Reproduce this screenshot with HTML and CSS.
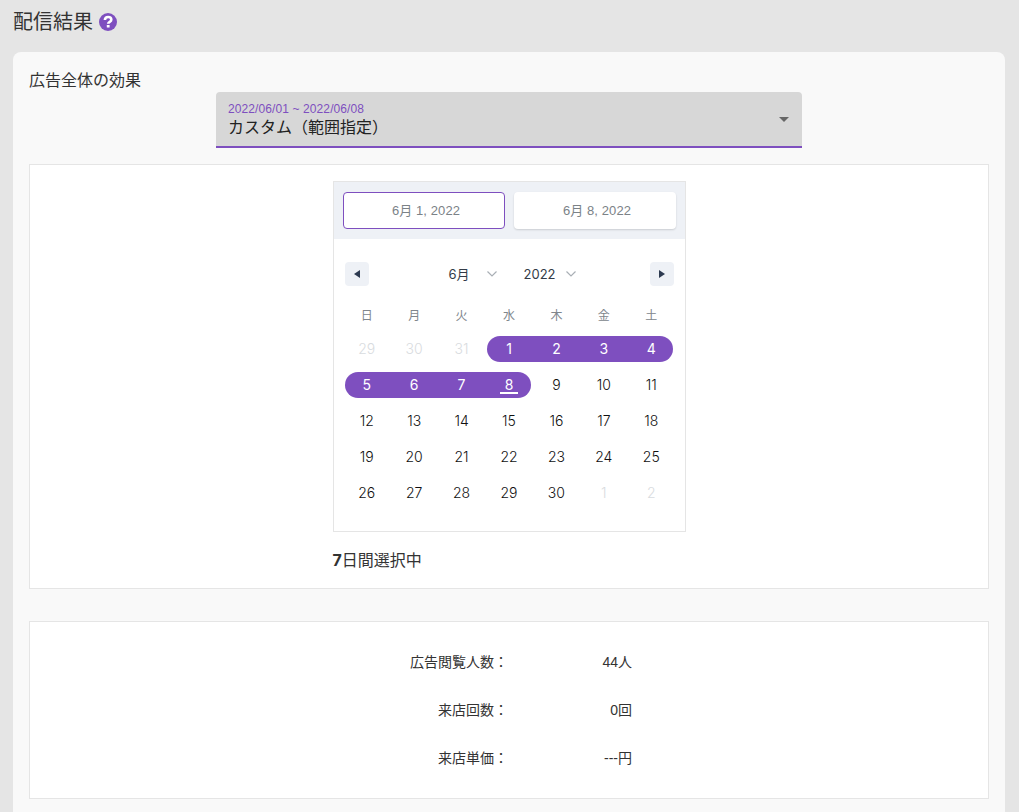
FILE: index.html
```html
<!DOCTYPE html>
<html lang="ja">
    <head>
        <meta charset="UTF-8" />
        <meta name="viewport" content="width=device-width, initial-scale=1.0" />
        <title>配信結果</title>
        <link rel="stylesheet" href="styles.css">
    </head>
    <body>
        <div class="page-title">
            <h1>配信結果</h1>
            <svg class="help-icon" width="18" height="18" viewBox="0 0 18 18">
                <circle cx="9" cy="9" r="9" fill="#7e4fbf" />
                <path d="M5.9 7C5.9 5.2 7.2 4 9.1 4C10.9 4 12.3 5.1 12.3 6.7C12.3 8.9 9.2 8.7 9.2 10.8" fill="none" stroke="#fff" stroke-width="2.6" />
                <rect x="7.8" y="12" width="2.8" height="2.6" rx="0.4" fill="#fff" />
            </svg>
        </div>

        <div class="card">
            <h2 class="card-label">広告全体の効果</h2>

            <div class="select">
                <div class="select-range">2022/06/01 ~ 2022/06/08</div>
                <div class="select-value">カスタム（範囲指定）</div>
                <span class="select-arrow"></span>
            </div>

            <div class="panel panel-calendar">
                <div class="calendar-wrap">
                    <div class="calendar">
                        <div class="date-inputs">
                            <div class="date-input active">6月 1, 2022</div>
                            <div class="date-input">6月 8, 2022</div>
                        </div>
                        <div class="month-nav">
                            <button class="nav-btn">
                                <svg width="6" height="8" viewBox="0 0 6 8"><path d="M6 0V8L0 4Z" fill="#2d3a50" /></svg>
                            </button>
                            <div class="month-picks">
                                <span class="pick pick-month">6月
                                    <svg width="10" height="6" viewBox="0 0 10 6"><path d="M0.5 0.5L5 5L9.5 0.5" fill="none" stroke="#a9afb5" stroke-width="1.2" /></svg>
                                </span>
                                <span class="pick">2022
                                    <svg width="10" height="6" viewBox="0 0 10 6"><path d="M0.5 0.5L5 5L9.5 0.5" fill="none" stroke="#a9afb5" stroke-width="1.2" /></svg>
                                </span>
                            </div>
                            <button class="nav-btn">
                                <svg width="6" height="8" viewBox="0 0 6 8"><path d="M0 0V8L6 4Z" fill="#2d3a50" /></svg>
                            </button>
                        </div>
                        <div class="days">
                            <span class="weekday">日</span>
                            <span class="weekday">月</span>
                            <span class="weekday">火</span>
                            <span class="weekday">水</span>
                            <span class="weekday">木</span>
                            <span class="weekday">金</span>
                            <span class="weekday">土</span>

                            <span class="day muted">29</span>
                            <span class="day muted">30</span>
                            <span class="day muted">31</span>
                            <span class="day range start">1</span>
                            <span class="day range">2</span>
                            <span class="day range">3</span>
                            <span class="day range end">4</span>

                            <span class="day range start">5</span>
                            <span class="day range">6</span>
                            <span class="day range">7</span>
                            <span class="day range end today">8</span>
                            <span class="day">9</span>
                            <span class="day">10</span>
                            <span class="day">11</span>

                            <span class="day">12</span>
                            <span class="day">13</span>
                            <span class="day">14</span>
                            <span class="day">15</span>
                            <span class="day">16</span>
                            <span class="day">17</span>
                            <span class="day">18</span>

                            <span class="day">19</span>
                            <span class="day">20</span>
                            <span class="day">21</span>
                            <span class="day">22</span>
                            <span class="day">23</span>
                            <span class="day">24</span>
                            <span class="day">25</span>

                            <span class="day">26</span>
                            <span class="day">27</span>
                            <span class="day">28</span>
                            <span class="day">29</span>
                            <span class="day">30</span>
                            <span class="day muted">1</span>
                            <span class="day muted">2</span>
                        </div>
                    </div>
                    <p class="selected-days"><b>7</b>日間選択中</p>
                </div>
            </div>

            <div class="panel panel-stats">
                <div class="stat-label">広告閲覧人数：</div>
                <div class="stat-value">44人</div>
                <div class="stat-label">来店回数：</div>
                <div class="stat-value">0回</div>
                <div class="stat-label">来店単価：</div>
                <div class="stat-value">---円</div>
            </div>
        </div>
    </body>
</html>
```

FILE: styles.css
```css
* {
    margin: 0;
    padding: 0;
    box-sizing: border-box;
    font-family: Inter, "Noto Sans CJK JP", sans-serif;
}

html,
body {
    height: 812px;
    overflow: hidden;
}

body {
    background: #e5e5e5;
    color: #333;
    padding: 0 14px 0 13px;
}

.page-title {
    display: flex;
    align-items: center;
    gap: 6px;
    height: 52px;
    padding-bottom: 8px;
}

.page-title h1 {
    font-size: 20px;
    font-weight: 400;
    line-height: 28px;
}

.card {
    background: #f9f9f9;
    border-radius: 8px 8px 0 0;
    padding: 16px;
    height: 780px;
}

.card-label {
    font-size: 16px;
    font-weight: 400;
    line-height: 24px;
}

.select {
    position: relative;
    width: 586px;
    height: 56px;
    margin-left: 187px;
    padding: 9px 12px 0;
    background: #d7d7d7;
    border-bottom: 2px solid #7e4fbf;
    border-radius: 4px 4px 0 0;
}

.select-range {
    font-family: "Liberation Sans", "Noto Sans CJK JP", sans-serif;
    font-size: 12px;
    line-height: 16px;
    letter-spacing: 0.1px;
    color: #7e4fbf;
}

.select-value {
    font-size: 16px;
    line-height: 20px;
    color: #222;
}

.select-arrow {
    position: absolute;
    top: 25px;
    right: 13px;
    border-left: 5px solid transparent;
    border-right: 5px solid transparent;
    border-top: 5px solid #666;
}

.panel {
    background: #fff;
    border: 1px solid #e5e5e5;
}

.panel-calendar {
    margin-top: 16px;
    height: 425px;
    padding-top: 16px;
    display: flex;
    justify-content: center;
}

.calendar-wrap {
    width: 353px;
}

.calendar {
    border: 1px solid #e5e5e5;
    height: 351px;
}

.date-inputs {
    display: grid;
    grid-template-columns: 162px 162px;
    gap: 9px;
    height: 57px;
    padding: 10px 9px;
    background: #eef1f6;
}

.date-input {
    display: flex;
    align-items: center;
    justify-content: center;
    padding: 0 0 2px 5px;
    background: #fff;
    border-radius: 4px;
    font-family: "Liberation Sans", "Noto Sans CJK JP", sans-serif;
    font-size: 13px;
    letter-spacing: 0.1px;
    color: #7b8287;
    box-shadow: 0 1px 2px rgba(0, 0, 0, 0.15);
}

.date-input.active {
    border: 1px solid #7e4fbf;
    box-shadow: none;
}

.month-nav {
    display: flex;
    align-items: center;
    justify-content: space-between;
    margin-top: 23px;
    padding: 0 11px;
    height: 24px;
}

.nav-btn {
    display: flex;
    align-items: center;
    justify-content: center;
    width: 24px;
    height: 24px;
    border: none;
    border-radius: 4px;
    background: #eef1f6;
}

.month-picks {
    display: flex;
    gap: 27px;
    margin-left: 6px;
}

.pick {
    display: flex;
    align-items: center;
    gap: 10px;
    font-size: 13px;
    line-height: 18px;
    color: #333b47;
}

.pick-month {
    gap: 17px;
}

.days {
    display: grid;
    grid-template-columns: repeat(7, 1fr);
    grid-template-rows: 25px;
    grid-auto-rows: 26px;
    row-gap: 10px;
    margin-top: 15px;
    padding: 0 9.5px;
}

.weekday {
    display: flex;
    align-items: center;
    justify-content: center;
    padding-top: 1px;
    font-size: 12px;
    color: #80868c;
}

.day {
    display: flex;
    align-items: center;
    justify-content: center;
    padding-bottom: 1px;
    font-size: 14px;
    font-weight: 300;
    color: #111;
}

.day.muted {
    color: #d9dce0;
}

.day.range {
    position: relative;
    background: #7e4fbf;
    color: #fff;
    font-weight: 400;
}

.day.start {
    margin-left: 2px;
    padding-right: 2px;
    border-radius: 13px 0 0 13px;
}

.day.end {
    margin-right: 2px;
    padding-left: 2px;
    border-radius: 0 13px 13px 0;
}

.day.today::after {
    content: "";
    position: absolute;
    left: 50%;
    bottom: 4px;
    width: 18px;
    height: 2px;
    margin-left: -8px;
    background: #fff;
}

.selected-days {
    margin-top: 18px;
    font-size: 16px;
    line-height: 20px;
}

.panel-stats {
    margin-top: 32px;
    height: 178px;
    padding-top: 15px;
    display: grid;
    grid-template-columns: 478px 124px;
    grid-auto-rows: 48px;
    font-size: 14px;
}

.stat-label,
.stat-value {
    display: flex;
    align-items: center;
    justify-content: flex-end;
    color: #333;
}

.stat-value {
    font-family: "Liberation Sans", "Noto Sans CJK JP", sans-serif;
}
```
